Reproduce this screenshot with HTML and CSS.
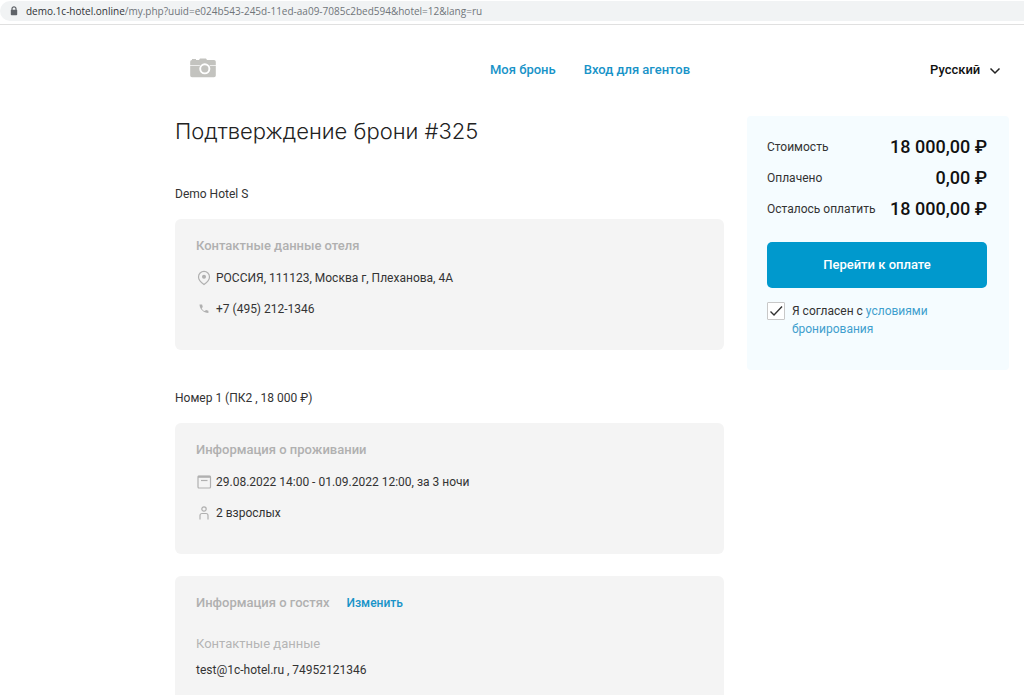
FILE: index.html
```html
<!DOCTYPE html>
<html lang="ru">
<head>
<meta charset="utf-8">
<meta name="viewport" content="width=device-width, initial-scale=1">
<title>Подтверждение брони #325</title>
<link rel="stylesheet" href="styles.css">
</head>
<body>
<div class="browser-bar">
  <div class="address">
    <svg class="lock" viewBox="0 0 8 10" width="8" height="10" aria-hidden="true"><path d="M2 4V2.800a2 2 0 0 1 4 0V4" fill="none" stroke="#5f6368" stroke-width="1.200"/><rect x="0.800" y="3.800" width="6.400" height="5.400" rx="0.800" fill="#5f6368"/></svg>
    <span class="url"><span class="host">demo.1c-hotel.online</span>/my.php?uuid=e024b543-245d-11ed-aa09-7085c2bed594&amp;hotel=12&amp;lang=ru</span>
  </div>
</div>
<header class="header">
  <svg class="logo" viewBox="0 0 26 20" width="26" height="20" role="img" aria-label="Логотип отеля"><path d="M2 2V1h4v1h3L10 .5h6L17 2h7a1.800 1.800 0 0 1 1.800 1.800v13.700A1.800 1.800 0 0 1 24 19.300H2A1.800 1.800 0 0 1 .2 17.500V3.800A1.800 1.800 0 0 1 2 2z" fill="#c3c3bf"/><path d="M0 7.500h26" stroke="#fff" stroke-width=".7"/><circle cx="14.800" cy="10.800" r="6" fill="#c3c3bf"/><circle cx="14.800" cy="10.800" r="4.600" fill="none" stroke="#fff" stroke-width="1.900"/></svg>
  <nav class="nav">
    <a href="#booking">Моя бронь</a>
    <a href="#agents">Вход для агентов</a>
  </nav>
  <div class="language">
    <select class="language-select" aria-label="Язык"><option>Русский</option></select>
    <svg class="chevron" viewBox="0 0 12 8" width="12" height="8" aria-hidden="true"><path d="M1.500 1.500 6 6l4.500-4.500" fill="none" stroke="#222" stroke-width="1.500"/></svg>
  </div>
</header>
<div class="layout">
  <main class="content">
    <h1 class="title">Подтверждение брони #325</h1>
    <h2 class="section-title">Demo Hotel S</h2>
    <section class="card">
      <h3 class="card-title">Контактные данные отеля</h3>
      <p class="row"><svg class="icon" viewBox="0 0 16 16" width="16" height="16" aria-hidden="true"><path d="M8 14.500C5 12.300 2.500 10 2.500 6.900a5.500 5.500 0 0 1 11 0c0 3.100-2.500 5.400-5.500 7.600z"/><circle cx="8" cy="6.800" r="1.400" fill="#b0b0b0"/></svg>РОССИЯ, 111123, Москва г, Плеханова, 4А</p>
      <p class="row"><svg class="icon" viewBox="0 0 16 16" width="16" height="16" aria-hidden="true"><path d="M3.500 3.500c.2 4.600 3.900 8.200 8.900 8.500v-2.300l-2.300-.8-1.400 1.200C7.300 9.500 6.300 8.500 5.700 7.200l1.100-1.300-.7-2.400z" fill="#b0b0b0" stroke="none"/></svg>+7 (495) 212-1346</p>
    </section>
    <h2 class="section-title">Номер 1 (ПК2 , 18 000 ₽)</h2>
    <section class="card">
      <h3 class="card-title">Информация о проживании</h3>
      <p class="row"><svg class="icon" viewBox="0 0 16 16" width="16" height="16" aria-hidden="true"><rect x="2" y="2" width="12.500" height="12" rx="1"/><path d="M2 2.800h12.500" stroke-width="2"/><path d="M5 6.500h6.500"/></svg>29.08.2022 14:00 - 01.09.2022 12:00, за 3 ночи</p>
      <p class="row"><svg class="icon" viewBox="0 0 16 16" width="16" height="16" aria-hidden="true"><circle cx="8" cy="4" r="2.200"/><path d="M4 14.500V10.500a2 2 0 0 1 2-2h4a2 2 0 0 1 2 2v4"/></svg>2 взрослых</p>
    </section>
    <section class="card card-guests">
      <div class="card-head">
        <h3 class="card-title">Информация о гостях</h3>
        <a class="edit" href="#edit">Изменить</a>
      </div>
      <h4 class="subtitle">Контактные данные</h4>
      <p class="contact">test@1c-hotel.ru , 74952121346</p>
    </section>
  </main>
  <aside class="payment">
    <dl class="totals">
      <div class="total"><dt>Стоимость</dt><dd>18 000,00 ₽</dd></div>
      <div class="total"><dt>Оплачено</dt><dd>0,00 ₽</dd></div>
      <div class="total"><dt>Осталось оплатить</dt><dd>18 000,00 ₽</dd></div>
    </dl>
    <button class="pay" type="button">Перейти к оплате</button>
    <div class="agree">
      <span class="tick">
        <input class="tick-box" type="checkbox" id="agree" checked>
        <svg class="tick-mark" viewBox="0 0 18 18" width="18" height="18" aria-hidden="true"><path d="M3.500 9.500 7 13l8-8.500" fill="none" stroke="#333" stroke-width="1.400"/></svg>
      </span>
      <label for="agree">Я согласен с <a href="#terms">условиями<br>бронирования</a></label>
    </div>
  </aside>
</div>
</body>
</html>
```

FILE: styles.css
```css
* { box-sizing: border-box; }

body {
  margin: 0;
  min-height: 100vh;
  display: flex;
  flex-direction: column;
  background: #fff;
  color: #333;
  font: 12px/18px Roboto, "Noto Sans", sans-serif;
}

h1, h2, h3, h4, p, dl, dd { margin: 0; font-weight: 400; }

a { color: #1893c8; text-decoration: none; }

.browser-bar {
  padding: 1px 0 3px;
  border-bottom: 1px solid #e0e0e0;
}

.address {
  display: flex;
  align-items: center;
  gap: 8px;
  height: 20px;
  padding-left: 10px;
  border-radius: 10px 0 0 10px;
  background: #f1f3f4;
}

.url {
  color: #70757a;
  font: 10px/20px "Open Sans", "Noto Sans", sans-serif;
  white-space: nowrap;
}

.host { color: #303236; }

.header {
  display: grid;
  grid-template-columns: 300px 1fr auto;
  align-items: center;
  padding: 33px 23px 0 190px;
}

.logo { align-self: start; }

.nav {
  display: flex;
  gap: 28px;
  padding-top: 2px;
  font-size: 13px;
  line-height: 20px;
}

.nav a { font-weight: 500; }

.language { position: relative; padding-top: 2px; }

.language-select {
  appearance: none;
  display: block;
  padding: 0 20px 0 0;
  border: 0;
  background: transparent;
  color: #111;
  font: 500 13px/20px Roboto, "Noto Sans", sans-serif;
}

.chevron {
  position: absolute;
  right: 0;
  top: 9px;
  pointer-events: none;
}

.layout {
  flex: 1;
  display: grid;
  grid-template-columns: 1fr 262px;
  gap: 23px;
  padding: 35px 15px 0 175px;
}

.content { display: flex; flex-direction: column; }

.title {
  color: #222;
  font-family: Inter, "Noto Sans", sans-serif;
  font-size: 22px;
  line-height: 32px;
  font-weight: 300;
}

.section-title {
  margin: 38px 0 16px;
  font-size: 12px;
  line-height: 18px;
}

.card {
  min-height: 131px;
  padding: 17px 21px;
  border-radius: 6px;
  background: #f4f4f4;
}

.card + .section-title { margin-top: 39px; }

.card-title {
  color: #b0b0b0;
  font-size: 13px;
  line-height: 20px;
  font-weight: 500;
}

.row {
  display: flex;
  align-items: center;
  gap: 4px;
  margin-top: 13px;
}

.icon {
  fill: none;
  stroke: #b0b0b0;
  stroke-width: 1.2;
}

.card-guests {
  flex: 1;
  margin-top: 22px;
  border-radius: 6px 6px 0 0;
}

.card-head { display: flex; align-items: center; gap: 17px; }

.edit { font-weight: 500; }

.subtitle {
  margin-top: 21px;
  color: #b5b5b5;
  font-size: 13px;
  line-height: 20px;
}

.contact { margin-top: 7px; }

.payment {
  align-self: start;
  margin-top: 1px;
  padding: 15px 22px 32px 20px;
  border-radius: 4px;
  background: #f5fcff;
}

.total {
  display: flex;
  justify-content: space-between;
  align-items: center;
  height: 31px;
  white-space: nowrap;
}

.total dd {
  color: #111;
  font-size: 18px;
  font-weight: 500;
}

.pay {
  display: block;
  width: 100%;
  height: 46px;
  margin-top: 18px;
  border: 0;
  border-radius: 5px;
  background: #0099cd;
  color: #fff;
  font: 500 13px/20px Roboto, "Noto Sans", sans-serif;
}

.agree {
  display: flex;
  gap: 7px;
  margin-top: 14px;
}

.agree a { color: #409fce; }

.tick { position: relative; flex: none; width: 18px; height: 18px; }

.tick-box {
  appearance: none;
  display: block;
  width: 18px;
  height: 18px;
  margin: 0;
  border: 1px solid #c8c8c8;
  border-radius: 1px;
  background: #fff;
}

.tick-mark {
  position: absolute;
  inset: 0;
  visibility: hidden;
  pointer-events: none;
}

.tick-box:checked + .tick-mark { visibility: visible; }
```
